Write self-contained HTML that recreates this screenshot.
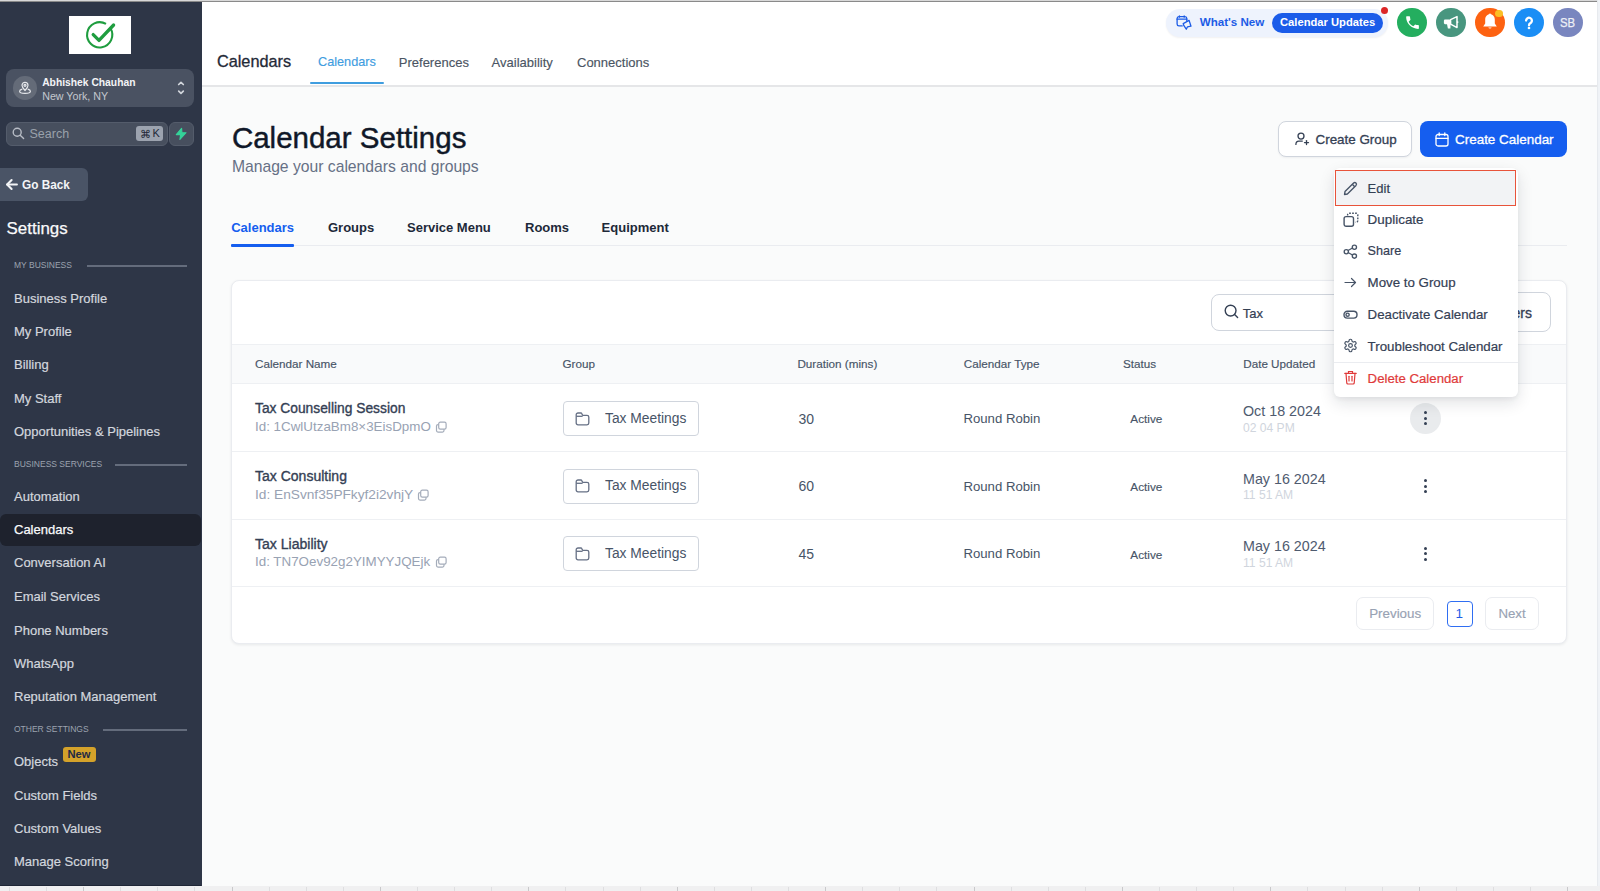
<!DOCTYPE html>
<html><head><meta charset="utf-8"><title>Calendar Settings</title>
<style>
html,body{margin:0;padding:0;width:1600px;height:891px;overflow:hidden;background:#f9fafb;}
body{position:relative;font-family:"Liberation Sans",sans-serif;}
.t{position:absolute;white-space:nowrap;}
.r{position:absolute;}
svg.r{overflow:visible;}
</style></head><body>
<div class="r" style="left:0.0px;top:0.0px;width:201.6px;height:886.2px;background:#2e3647;"></div>
<div class="r" style="left:69.3px;top:16.4px;width:61.7px;height:37.2px;background:#fff;"></div>
<svg class="r" style="left:84px;top:21px" width="32" height="28" viewBox="0 0 32 28">
<path d="M22 2.9 A12.6 12.6 0 1 0 26.6 7.5" fill="none" stroke="#1f9d3f" stroke-width="2.1"/>
<path d="M9.2 13.6 L15 19.4 L29.6 4" fill="none" stroke="#1f9d3f" stroke-width="3.3" stroke-linecap="round" stroke-linejoin="round"/>
</svg>
<div class="r" style="left:6.2px;top:68.5px;width:188.0px;height:38.7px;background:#4a5262;border-radius:8px;"></div>
<div class="r" style="left:13.0px;top:76.3px;width:23.5px;height:23.5px;background:#646b78;border-radius:50%;"></div>
<svg class="r" style="left:17px;top:79.1px" width="16" height="16" viewBox="0 0 16 16" fill="none" stroke="#e5e7eb" stroke-width="1.2">
<path d="M8 11.5 C5.5 9 5 7.8 5 6.3 A3 3 0 0 1 11 6.3 C11 7.8 10.5 9 8 11.5 Z"/><circle cx="8" cy="6.3" r="1"/>
<path d="M5.3 10.2 C3.5 10.7 2.6 11.4 2.6 12.2 C2.6 13.4 5 14.3 8 14.3 C11 14.3 13.4 13.4 13.4 12.2 C13.4 11.4 12.5 10.7 10.7 10.2"/>
</svg>
<div class="t" style="left:42.2px;top:78.48px;font-size:10.3px;line-height:10.3px;color:#f3f4f6;font-weight:700;">Abhishek Chauhan</div>
<div class="t" style="left:42.2px;top:91.34px;font-size:10.7px;line-height:10.7px;color:#c4c8cf;font-weight:400;">New York, NY</div>
<svg class="r" style="left:176px;top:80px" width="10" height="17" viewBox="0 0 10 17" fill="none" stroke="#d1d5db" stroke-width="1.7" stroke-linecap="round" stroke-linejoin="round">
<path d="M2.7 4.5 L5 2.3 L7.3 4.5"/><path d="M2.7 11.2 L5 13.4 L7.3 11.2"/></svg>
<div class="r" style="left:6.3px;top:121.8px;width:161.9px;height:24.0px;background:#474f5e;border:1px solid #545c6b;box-sizing:border-box;border-radius:6px;"></div>
<svg class="r" style="left:12px;top:127px" width="13" height="13" viewBox="0 0 13 13" fill="none" stroke="#b8bdc6" stroke-width="1.4" stroke-linecap="round">
<circle cx="5.2" cy="5.2" r="4"/><path d="M8.2 8.2 L11.6 11.6"/></svg>
<div class="t" style="left:29.5px;top:127.72px;font-size:12.5px;line-height:12.5px;color:#9aa1ab;font-weight:400;">Search</div>
<div class="r" style="left:136.1px;top:126.2px;width:27.4px;height:15.2px;background:#9ca3af;border-radius:3px;"></div>
<div class="t" style="left:139.5px;top:128.91px;font-size:10.5px;line-height:10.5px;color:#1f2937;font-weight:400;">&#8984;</div>
<div class="t" style="left:152.5px;top:128.49px;font-size:11px;line-height:11px;color:#1f2937;font-weight:400;">K</div>
<div class="r" style="left:168.8px;top:121.9px;width:25.4px;height:23.9px;background:#474f5e;border:1px solid #545c6b;box-sizing:border-box;border-radius:6px;"></div>
<svg class="r" style="left:175px;top:127px" width="13" height="14" viewBox="0 0 13 14">
<path d="M6.6 1.3 L1.3 7.6 H5.6 L4.9 12.5 L11 5.7 H6.9 Z" fill="#34d399" stroke="#34d399" stroke-width="1.1" stroke-linejoin="round"/></svg>
<div class="r" style="left:0.0px;top:168.2px;width:87.7px;height:33.0px;background:#4a5466;border-radius:0 6px 6px 0;"></div>
<svg class="r" style="left:5px;top:178px" width="14" height="13" viewBox="0 0 14 13" fill="none" stroke="#f3f4f6" stroke-width="2.1" stroke-linecap="round" stroke-linejoin="round">
<path d="M11.9 6.5 L2.3 6.5"/><path d="M6.6 2 L2.1 6.5 L6.6 11"/></svg>
<div class="t" style="left:21.5px;top:178.43px;font-size:13.2px;line-height:13.2px;color:#f3f4f6;font-weight:700;transform:scaleX(0.895);transform-origin:0 0;">Go Back</div>
<div class="t" style="left:6.6px;top:220.69px;font-size:16.9px;line-height:16.9px;color:#f9fafb;font-weight:400;-webkit-text-stroke:0.25px #f9fafb;">Settings</div>
<div class="t" style="left:14.0px;top:261.30px;font-size:8.5px;line-height:8.5px;color:#9ca3af;font-weight:400;">MY BUSINESS</div>
<div class="r" style="left:87.0px;top:265.2px;width:100.0px;height:1.5px;background:#646c7c;"></div>
<div class="t" style="left:14.0px;top:291.50px;font-size:13px;line-height:13px;color:#d3d7de;font-weight:400;-webkit-text-stroke:0.2px #d3d7de;">Business Profile</div>
<div class="t" style="left:14.0px;top:324.90px;font-size:13px;line-height:13px;color:#d3d7de;font-weight:400;-webkit-text-stroke:0.2px #d3d7de;">My Profile</div>
<div class="t" style="left:14.0px;top:358.30px;font-size:13px;line-height:13px;color:#d3d7de;font-weight:400;-webkit-text-stroke:0.2px #d3d7de;">Billing</div>
<div class="t" style="left:14.0px;top:391.70px;font-size:13px;line-height:13px;color:#d3d7de;font-weight:400;-webkit-text-stroke:0.2px #d3d7de;">My Staff</div>
<div class="t" style="left:14.0px;top:424.80px;font-size:13px;line-height:13px;color:#d3d7de;font-weight:400;-webkit-text-stroke:0.2px #d3d7de;">Opportunities &amp; Pipelines</div>
<div class="t" style="left:14.0px;top:460.40px;font-size:8.5px;line-height:8.5px;color:#9ca3af;font-weight:400;">BUSINESS SERVICES</div>
<div class="r" style="left:115.0px;top:464.3px;width:72.0px;height:1.5px;background:#646c7c;"></div>
<div class="t" style="left:14.0px;top:489.70px;font-size:13px;line-height:13px;color:#d3d7de;font-weight:400;-webkit-text-stroke:0.2px #d3d7de;">Automation</div>
<div class="r" style="left:0.0px;top:513.9px;width:200.8px;height:32.4px;background:#1e222d;border-radius:6px;"></div>
<div class="t" style="left:14.0px;top:523.00px;font-size:13px;line-height:13px;color:#f9fafb;font-weight:400;-webkit-text-stroke:0.25px #f9fafb;">Calendars</div>
<div class="t" style="left:14.0px;top:556.30px;font-size:13px;line-height:13px;color:#d3d7de;font-weight:400;-webkit-text-stroke:0.2px #d3d7de;">Conversation AI</div>
<div class="t" style="left:14.0px;top:589.90px;font-size:13px;line-height:13px;color:#d3d7de;font-weight:400;-webkit-text-stroke:0.2px #d3d7de;">Email Services</div>
<div class="t" style="left:14.0px;top:623.50px;font-size:13px;line-height:13px;color:#d3d7de;font-weight:400;-webkit-text-stroke:0.2px #d3d7de;">Phone Numbers</div>
<div class="t" style="left:14.0px;top:656.70px;font-size:13px;line-height:13px;color:#d3d7de;font-weight:400;-webkit-text-stroke:0.2px #d3d7de;">WhatsApp</div>
<div class="t" style="left:14.0px;top:690.30px;font-size:13px;line-height:13px;color:#d3d7de;font-weight:400;-webkit-text-stroke:0.2px #d3d7de;">Reputation Management</div>
<div class="t" style="left:14.0px;top:725.30px;font-size:8.5px;line-height:8.5px;color:#9ca3af;font-weight:400;">OTHER SETTINGS</div>
<div class="r" style="left:103.0px;top:729.2px;width:84.0px;height:1.5px;background:#646c7c;"></div>
<div class="t" style="left:14.0px;top:754.60px;font-size:13px;line-height:13px;color:#d3d7de;font-weight:400;-webkit-text-stroke:0.2px #d3d7de;">Objects</div>
<div class="r" style="left:63.1px;top:746.9px;width:32.5px;height:15.4px;background:#d4a22a;border-radius:3px;"></div>
<div class="t" style="left:67.5px;top:748.52px;font-size:11.2px;line-height:11.2px;color:#1f2a44;font-weight:700;">New</div>
<div class="t" style="left:14.0px;top:788.50px;font-size:13px;line-height:13px;color:#d3d7de;font-weight:400;-webkit-text-stroke:0.2px #d3d7de;">Custom Fields</div>
<div class="t" style="left:14.0px;top:821.70px;font-size:13px;line-height:13px;color:#d3d7de;font-weight:400;-webkit-text-stroke:0.2px #d3d7de;">Custom Values</div>
<div class="t" style="left:14.0px;top:855.10px;font-size:13px;line-height:13px;color:#d3d7de;font-weight:400;-webkit-text-stroke:0.2px #d3d7de;">Manage Scoring</div>
<div class="r" style="left:0.0px;top:886.2px;width:1600.0px;height:4.8px;background:#f0f0f1;"></div>
<div class="r" style="left:0.0px;top:885.2px;width:201.4px;height:1.1px;background:#1f2636;"></div>
<div class="r" style="left:8.9px;top:886.5px;width:1.1px;height:4.5px;background:#dedee0;"></div>
<div class="r" style="left:46.0px;top:886.5px;width:1.1px;height:4.5px;background:#dedee0;"></div>
<div class="r" style="left:83.1px;top:886.5px;width:1.1px;height:4.5px;background:#c9c9cb;"></div>
<div class="r" style="left:120.2px;top:886.5px;width:1.1px;height:4.5px;background:#dedee0;"></div>
<div class="r" style="left:157.3px;top:886.5px;width:1.1px;height:4.5px;background:#dedee0;"></div>
<div class="r" style="left:194.4px;top:886.5px;width:1.1px;height:4.5px;background:#dedee0;"></div>
<div class="r" style="left:231.5px;top:886.5px;width:1.1px;height:4.5px;background:#c9c9cb;"></div>
<div class="r" style="left:268.6px;top:886.5px;width:1.1px;height:4.5px;background:#dedee0;"></div>
<div class="r" style="left:305.7px;top:886.5px;width:1.1px;height:4.5px;background:#dedee0;"></div>
<div class="r" style="left:342.8px;top:886.5px;width:1.1px;height:4.5px;background:#dedee0;"></div>
<div class="r" style="left:379.9px;top:886.5px;width:1.1px;height:4.5px;background:#c9c9cb;"></div>
<div class="r" style="left:417.0px;top:886.5px;width:1.1px;height:4.5px;background:#dedee0;"></div>
<div class="r" style="left:454.1px;top:886.5px;width:1.1px;height:4.5px;background:#dedee0;"></div>
<div class="r" style="left:491.2px;top:886.5px;width:1.1px;height:4.5px;background:#dedee0;"></div>
<div class="r" style="left:528.3px;top:886.5px;width:1.1px;height:4.5px;background:#c9c9cb;"></div>
<div class="r" style="left:565.4px;top:886.5px;width:1.1px;height:4.5px;background:#dedee0;"></div>
<div class="r" style="left:602.5px;top:886.5px;width:1.1px;height:4.5px;background:#dedee0;"></div>
<div class="r" style="left:639.6px;top:886.5px;width:1.1px;height:4.5px;background:#dedee0;"></div>
<div class="r" style="left:676.7px;top:886.5px;width:1.1px;height:4.5px;background:#c9c9cb;"></div>
<div class="r" style="left:713.8px;top:886.5px;width:1.1px;height:4.5px;background:#dedee0;"></div>
<div class="r" style="left:750.9px;top:886.5px;width:1.1px;height:4.5px;background:#dedee0;"></div>
<div class="r" style="left:788.0px;top:886.5px;width:1.1px;height:4.5px;background:#dedee0;"></div>
<div class="r" style="left:825.1px;top:886.5px;width:1.1px;height:4.5px;background:#c9c9cb;"></div>
<div class="r" style="left:862.2px;top:886.5px;width:1.1px;height:4.5px;background:#dedee0;"></div>
<div class="r" style="left:899.3px;top:886.5px;width:1.1px;height:4.5px;background:#dedee0;"></div>
<div class="r" style="left:936.4px;top:886.5px;width:1.1px;height:4.5px;background:#dedee0;"></div>
<div class="r" style="left:973.5px;top:886.5px;width:1.1px;height:4.5px;background:#c9c9cb;"></div>
<div class="r" style="left:1010.6px;top:886.5px;width:1.1px;height:4.5px;background:#dedee0;"></div>
<div class="r" style="left:1047.7px;top:886.5px;width:1.1px;height:4.5px;background:#dedee0;"></div>
<div class="r" style="left:1084.8px;top:886.5px;width:1.1px;height:4.5px;background:#dedee0;"></div>
<div class="r" style="left:1121.9px;top:886.5px;width:1.1px;height:4.5px;background:#c9c9cb;"></div>
<div class="r" style="left:1159.0px;top:886.5px;width:1.1px;height:4.5px;background:#dedee0;"></div>
<div class="r" style="left:1196.1px;top:886.5px;width:1.1px;height:4.5px;background:#dedee0;"></div>
<div class="r" style="left:1233.2px;top:886.5px;width:1.1px;height:4.5px;background:#dedee0;"></div>
<div class="r" style="left:1270.3px;top:886.5px;width:1.1px;height:4.5px;background:#c9c9cb;"></div>
<div class="r" style="left:1307.4px;top:886.5px;width:1.1px;height:4.5px;background:#dedee0;"></div>
<div class="r" style="left:1344.5px;top:886.5px;width:1.1px;height:4.5px;background:#dedee0;"></div>
<div class="r" style="left:1381.6px;top:886.5px;width:1.1px;height:4.5px;background:#dedee0;"></div>
<div class="r" style="left:1418.7px;top:886.5px;width:1.1px;height:4.5px;background:#c9c9cb;"></div>
<div class="r" style="left:1455.8px;top:886.5px;width:1.1px;height:4.5px;background:#dedee0;"></div>
<div class="r" style="left:1492.9px;top:886.5px;width:1.1px;height:4.5px;background:#dedee0;"></div>
<div class="r" style="left:1530.0px;top:886.5px;width:1.1px;height:4.5px;background:#dedee0;"></div>
<div class="r" style="left:1567.1px;top:886.5px;width:1.1px;height:4.5px;background:#c9c9cb;"></div>
<div class="r" style="left:1604.2px;top:886.5px;width:1.1px;height:4.5px;background:#dedee0;"></div>
<div class="r" style="left:201.6px;top:1.0px;width:1395.4px;height:84.3px;background:#fff;"></div>
<div class="r" style="left:201.6px;top:85.3px;width:1395.1px;height:1.3px;background:#e5e6e8;box-shadow:0 1px 1.5px rgba(0,0,0,0.05);"></div>
<div class="r" style="left:0.0px;top:0.0px;width:1600.0px;height:1.1px;background:#d8d8d8;"></div>
<div class="r" style="left:0.0px;top:1.1px;width:1600.0px;height:0.8px;background:#8a8a8a;"></div>
<div class="r" style="left:1596.7px;top:0.0px;width:3.3px;height:886.2px;background:#f0f3f7;box-shadow:inset 1px 0 1px rgba(0,0,0,0.04);"></div>
<div class="t" style="left:216.9px;top:52.70px;font-size:16.3px;line-height:16.3px;color:#1f2937;font-weight:400;-webkit-text-stroke:0.3px #1f2937;">Calendars</div>
<div class="t" style="left:318.0px;top:55.55px;font-size:12.7px;line-height:12.7px;color:#3f9ddf;font-weight:400;-webkit-text-stroke:0.15px #3f9ddf;">Calendars</div>
<div class="r" style="left:310.0px;top:81.6px;width:74.0px;height:2.0px;background:#3f9ddf;border-radius:1px;"></div>
<div class="t" style="left:398.8px;top:56.40px;font-size:13px;line-height:13px;color:#4b5563;font-weight:400;-webkit-text-stroke:0.15px #4b5563;">Preferences</div>
<div class="t" style="left:491.6px;top:56.40px;font-size:13px;line-height:13px;color:#4b5563;font-weight:400;-webkit-text-stroke:0.15px #4b5563;">Availability</div>
<div class="t" style="left:577.0px;top:56.40px;font-size:13px;line-height:13px;color:#4b5563;font-weight:400;-webkit-text-stroke:0.15px #4b5563;">Connections</div>
<div class="r" style="left:1166.0px;top:9.0px;width:222.0px;height:27.8px;background:#eef3fd;border-radius:14px;box-shadow:0 1px 2px rgba(16,24,40,0.06);"></div>
<svg class="r" style="left:1176px;top:15px" width="16" height="15" viewBox="0 0 16 15" fill="none" stroke="#1d5ce6" stroke-width="1.3" stroke-linecap="round" stroke-linejoin="round">
<path d="M6.2 10.9 H3 A2 2 0 0 1 1.1 8.9 V3.6 A2 2 0 0 1 3 1.6 H8.9 A2 2 0 0 1 10.8 3.6 V6"/><path d="M1.1 4.2 H10.8"/><path d="M3.4 0.9 V2.2"/><path d="M8.2 0.9 V2.2"/>
<path d="M7.2 8.6 L13.1 5.4 L15 11.2 L11.5 11.8 L10.3 14.2 L7.9 10.7 Z"/></svg>
<div class="t" style="left:1199.7px;top:16.38px;font-size:11.6px;line-height:11.6px;color:#1d5ce6;font-weight:700;">What's New</div>
<div class="r" style="left:1271.7px;top:12.8px;width:111.7px;height:19.9px;background:#1b5ce9;border-radius:10px;"></div>
<div class="t" style="left:1280.0px;top:16.72px;font-size:11.2px;line-height:11.2px;color:#ffffff;font-weight:700;">Calendar Updates</div>
<div class="r" style="left:1380.5px;top:6.8px;width:7.5px;height:7.5px;background:#dc2626;border-radius:50%;"></div>
<div class="r" style="left:1397.2px;top:7.7px;width:29.7px;height:29.7px;background:#24ae5f;border-radius:50%;"></div>
<svg class="r" style="left:1403.5px;top:14px" width="17" height="17" viewBox="0 0 24 24"><path fill="#fff" d="M6.6 10.8c1.4 2.8 3.8 5.1 6.6 6.6l2.2-2.2c.3-.3.7-.4 1-.2 1.1.4 2.3.6 3.6.6.6 0 1 .4 1 1V20c0 .6-.4 1-1 1C10.6 21 3 13.4 3 4c0-.6.4-1 1-1h3.5c.6 0 1 .4 1 1 0 1.3.2 2.5.6 3.6.1.3 0 .7-.2 1L6.6 10.8z"/></svg>
<div class="r" style="left:1436.2px;top:7.7px;width:29.7px;height:29.7px;background:#48967f;border-radius:50%;"></div>
<svg class="r" style="left:1443px;top:15px" width="16" height="15" viewBox="0 0 16 15">
<rect x="0.9" y="4.6" width="6.6" height="4.6" rx="1.1" fill="#fff"/><path d="M3.9 8.8 H7.6 L7.4 13.6 H4.9 Z" fill="#fff"/>
<path d="M7.6 4.7 L14 1.6 V12.6 L7.6 9.1 Z" fill="none" stroke="#fff" stroke-width="1.5" stroke-linejoin="round"/><circle cx="14.6" cy="7.1" r="0.9" fill="#fff"/></svg>
<div class="r" style="left:1475.2px;top:7.7px;width:29.7px;height:29.7px;background:#fd6211;border-radius:50%;"></div>
<svg class="r" style="left:1482px;top:13px" width="16" height="18" viewBox="0 0 16 18"><path fill="#fff" d="M8 1.2 C4.8 1.2 3.2 3.8 3.2 6.6 V10.6 L1.2 13.4 H14.8 L12.8 10.6 V6.6 C12.8 3.8 11.2 1.2 8 1.2 Z"/><path fill="#fff" d="M6.3 14.6 A1.8 1.5 0 0 0 9.7 14.6 Z"/><circle cx="8" cy="1.4" r="1" fill="#fff"/></svg>
<div class="r" style="left:1495.3px;top:9.5px;width:7.4px;height:7.4px;background:#fbbf24;border-radius:50%;"></div>
<div class="r" style="left:1514.2px;top:7.7px;width:29.7px;height:29.7px;background:#1b8ef5;border-radius:50%;"></div>
<svg class="r" style="left:1521.25px;top:14.5px" width="16" height="16" viewBox="0 0 16 16"><path d="M5.1 5.6 A2.9 2.9 0 1 1 9.9 7.8 C8.6 8.6 8 9.2 8 10.3" fill="none" stroke="#fff" stroke-width="2.3" stroke-linecap="round"/><circle cx="8" cy="13" r="1.35" fill="#fff"/></svg>
<div class="r" style="left:1553.2px;top:7.7px;width:29.7px;height:29.7px;background:#7986bf;border-radius:50%;"></div>
<div class="t" style="left:1560.3px;top:16.23px;font-size:13.2px;line-height:13.2px;color:#eef0f6;font-weight:400;-webkit-text-stroke:0.25px #eef0f6;transform:scaleX(0.86);transform-origin:0 0;">SB</div>
<div class="r" style="left:201.6px;top:86.6px;width:1395.1px;height:799.6px;background:#fafbfb;"></div>
<div class="t" style="left:231.9px;top:122.63px;font-size:29.5px;line-height:29.5px;color:#101828;font-weight:400;-webkit-text-stroke:0.45px #101828;">Calendar Settings</div>
<div class="t" style="left:231.9px;top:158.81px;font-size:15.7px;line-height:15.7px;color:#667085;font-weight:400;">Manage your calendars and groups</div>
<div class="r" style="left:1278.3px;top:120.7px;width:133.7px;height:36.8px;background:#fff;border:1px solid #d0d5dd;border-radius:8px;box-sizing:border-box;box-shadow:0 1px 2px rgba(16,24,40,0.05);"></div>
<svg class="r" style="left:1294px;top:132px" width="16" height="15" viewBox="0 0 16 15" fill="none" stroke="#344054" stroke-width="1.3" stroke-linecap="round">
<circle cx="7" cy="4.1" r="3"/><path d="M1.9 12.4 C1.9 10.4 2.9 9.1 4.9 9.1 H8.3"/><path d="M12.5 8.6 V12.6"/><path d="M10.5 10.6 H14.5"/></svg>
<div class="t" style="left:1315.5px;top:132.56px;font-size:13.4px;line-height:13.4px;color:#344054;font-weight:400;-webkit-text-stroke:0.3px #344054;">Create Group</div>
<div class="r" style="left:1419.6px;top:120.7px;width:147.4px;height:36.8px;background:#155eef;border-radius:8px;"></div>
<svg class="r" style="left:1434.5px;top:132px" width="14" height="15" viewBox="0 0 14 15" fill="none" stroke="#fff" stroke-width="1.3" stroke-linecap="round">
<rect x="1" y="2.5" width="12" height="11.5" rx="2"/><path d="M1 6.3 H13"/><path d="M4.2 1 V3.6"/><path d="M9.8 1 V3.6"/></svg>
<div class="t" style="left:1455.0px;top:132.51px;font-size:13.45px;line-height:13.45px;color:#ffffff;font-weight:400;-webkit-text-stroke:0.3px #ffffff;">Create Calendar</div>
<div class="r" style="left:231.2px;top:245.2px;width:1335.8px;height:1.1px;background:#eaecf0;"></div>
<div class="t" style="left:231.2px;top:220.90px;font-size:13px;line-height:13px;color:#155eef;font-weight:700;">Calendars</div>
<div class="t" style="left:328.0px;top:220.90px;font-size:13px;line-height:13px;color:#1d2939;font-weight:700;">Groups</div>
<div class="t" style="left:407.0px;top:220.90px;font-size:13px;line-height:13px;color:#1d2939;font-weight:700;">Service Menu</div>
<div class="t" style="left:525.0px;top:220.90px;font-size:13px;line-height:13px;color:#1d2939;font-weight:700;">Rooms</div>
<div class="t" style="left:601.6px;top:220.90px;font-size:13px;line-height:13px;color:#1d2939;font-weight:700;">Equipment</div>
<div class="r" style="left:231.2px;top:244.3px;width:63.1px;height:2.6px;background:#155eef;border-radius:1px;"></div>
<div class="r" style="left:231.3px;top:279.8px;width:1335.4px;height:364.5px;background:#fff;border:1px solid #eaecf0;border-radius:8px;box-sizing:border-box;box-shadow:0 1px 3px rgba(16,24,40,0.08);"></div>
<div class="r" style="left:1210.7px;top:294.2px;width:259.3px;height:36.4px;background:#fff;border:1px solid #d0d5dd;border-radius:8px;box-sizing:border-box;"></div>
<svg class="r" style="left:1223.5px;top:304px" width="15" height="15" viewBox="0 0 15 15" fill="none" stroke="#344054" stroke-width="1.4" stroke-linecap="round">
<circle cx="6.6" cy="6.6" r="5.4"/><path d="M10.6 10.6 L13.6 13.6"/></svg>
<div class="t" style="left:1242.8px;top:306.50px;font-size:13px;line-height:13px;color:#344054;font-weight:400;-webkit-text-stroke:0.2px #344054;">Tax</div>
<div class="r" style="left:1478.0px;top:292.4px;width:73.0px;height:39.9px;background:#fff;border:1px solid #d0d5dd;border-radius:8px;box-sizing:border-box;"></div>
<div class="t" style="left:1493.9px;top:305.65px;font-size:14px;line-height:14px;color:#344054;font-weight:400;-webkit-text-stroke:0.3px #344054;">Filters</div>
<div class="r" style="left:232.3px;top:344.3px;width:1333.4px;height:40.2px;background:#f9fafb;border-top:1px solid #eef0f3;border-bottom:1px solid #eef0f3;box-sizing:border-box;"></div>
<div class="t" style="left:255.0px;top:358.40px;font-size:11.7px;line-height:11.7px;color:#475467;font-weight:400;-webkit-text-stroke:0.15px #475467;">Calendar Name</div>
<div class="t" style="left:562.5px;top:358.40px;font-size:11.7px;line-height:11.7px;color:#475467;font-weight:400;-webkit-text-stroke:0.15px #475467;">Group</div>
<div class="t" style="left:797.4px;top:358.40px;font-size:11.7px;line-height:11.7px;color:#475467;font-weight:400;-webkit-text-stroke:0.15px #475467;">Duration (mins)</div>
<div class="t" style="left:963.8px;top:358.40px;font-size:11.7px;line-height:11.7px;color:#475467;font-weight:400;-webkit-text-stroke:0.15px #475467;">Calendar Type</div>
<div class="t" style="left:1123.0px;top:358.40px;font-size:11.7px;line-height:11.7px;color:#475467;font-weight:400;-webkit-text-stroke:0.15px #475467;">Status</div>
<div class="t" style="left:1243.2px;top:358.40px;font-size:11.7px;line-height:11.7px;color:#475467;font-weight:400;-webkit-text-stroke:0.15px #475467;">Date Updated</div>
<div class="r" style="left:232.3px;top:451.2px;width:1333.4px;height:1.1px;background:#eef0f3;"></div>
<div class="t" style="left:255.0px;top:401.92px;font-size:13.8px;line-height:13.8px;color:#344054;font-weight:400;-webkit-text-stroke:0.35px #344054;">Tax Counselling Session</div>
<div class="t" style="left:255.0px;top:420.17px;font-size:13.39px;line-height:13.39px;color:#98a2b3;font-weight:400;">Id: 1CwlUtzaBm8&#215;3EisDpmO</div>
<svg class="r" style="left:434.6px;top:421.9px" width="12" height="11" viewBox="0 0 12 11" fill="none" stroke="#a4acba" stroke-width="1.2">
<rect x="3.7" y="0.1" width="7.4" height="7.1" rx="1.6"/><path d="M3.6 2.6 H3 A1.5 1.5 0 0 0 1.5 4.1 V8.6 A1.5 1.5 0 0 0 3 10.1 H7.5 A1.5 1.5 0 0 0 9 8.6 V7.2"/></svg>
<div class="r" style="left:563.1px;top:401.0px;width:135.6px;height:35.2px;background:#fff;border:1px solid #d0d5dd;border-radius:4px;box-sizing:border-box;"></div>
<svg class="r" style="left:575px;top:411.8px" width="15" height="14" viewBox="0 0 15 14" fill="none" stroke="#667085" stroke-width="1.3" stroke-linejoin="round">
<path d="M1.2 2.8 A1.8 1.8 0 0 1 3 1 H5.9 A1 1 0 0 1 6.8 1.6 L7.6 3.3 H12 A1.8 1.8 0 0 1 13.8 5.1 V11 A1.8 1.8 0 0 1 12 12.8 H3 A1.8 1.8 0 0 1 1.2 11 Z"/><path d="M1.2 4.3 H7.6"/></svg>
<div class="t" style="left:605.0px;top:411.72px;font-size:13.8px;line-height:13.8px;color:#475467;font-weight:400;">Tax Meetings</div>
<div class="t" style="left:798.4px;top:411.55px;font-size:14px;line-height:14px;color:#475467;font-weight:400;">30</div>
<div class="t" style="left:963.4px;top:412.23px;font-size:13.19px;line-height:13.19px;color:#475467;font-weight:400;">Round Robin</div>
<div class="t" style="left:1130.3px;top:413.45px;font-size:11.75px;line-height:11.75px;color:#475467;font-weight:400;-webkit-text-stroke:0.15px #475467;">Active</div>
<div class="t" style="left:1243.0px;top:404.10px;font-size:14.3px;line-height:14.3px;color:#4f5b6f;font-weight:400;">Oct 18 2024</div>
<div class="t" style="left:1243.0px;top:421.76px;font-size:12.1px;line-height:12.1px;color:#d0d5dd;font-weight:400;">02 04 PM</div>
<div class="r" style="left:1410.1px;top:402.9px;width:31.0px;height:31.0px;background:#e9ebed;border-radius:50%;"></div>
<div class="r" style="left:1424.0px;top:411.4px;width:3.1px;height:3.1px;background:#344054;border-radius:50%;"></div>
<div class="r" style="left:1424.0px;top:416.9px;width:3.1px;height:3.1px;background:#344054;border-radius:50%;"></div>
<div class="r" style="left:1424.0px;top:422.4px;width:3.1px;height:3.1px;background:#344054;border-radius:50%;"></div>
<div class="r" style="left:232.3px;top:518.8px;width:1333.4px;height:1.1px;background:#eef0f3;"></div>
<div class="t" style="left:255.0px;top:469.32px;font-size:14.03px;line-height:14.03px;color:#344054;font-weight:400;-webkit-text-stroke:0.35px #344054;">Tax Consulting</div>
<div class="t" style="left:255.0px;top:487.50px;font-size:13.7px;line-height:13.7px;color:#98a2b3;font-weight:400;">Id: EnSvnf35PFkyf2i2vhjY</div>
<svg class="r" style="left:416.9px;top:489.5px" width="12" height="11" viewBox="0 0 12 11" fill="none" stroke="#a4acba" stroke-width="1.2">
<rect x="3.7" y="0.1" width="7.4" height="7.1" rx="1.6"/><path d="M3.6 2.6 H3 A1.5 1.5 0 0 0 1.5 4.1 V8.6 A1.5 1.5 0 0 0 3 10.1 H7.5 A1.5 1.5 0 0 0 9 8.6 V7.2"/></svg>
<div class="r" style="left:563.1px;top:468.6px;width:135.6px;height:35.2px;background:#fff;border:1px solid #d0d5dd;border-radius:4px;box-sizing:border-box;"></div>
<svg class="r" style="left:575px;top:479.4px" width="15" height="14" viewBox="0 0 15 14" fill="none" stroke="#667085" stroke-width="1.3" stroke-linejoin="round">
<path d="M1.2 2.8 A1.8 1.8 0 0 1 3 1 H5.9 A1 1 0 0 1 6.8 1.6 L7.6 3.3 H12 A1.8 1.8 0 0 1 13.8 5.1 V11 A1.8 1.8 0 0 1 12 12.8 H3 A1.8 1.8 0 0 1 1.2 11 Z"/><path d="M1.2 4.3 H7.6"/></svg>
<div class="t" style="left:605.0px;top:479.32px;font-size:13.8px;line-height:13.8px;color:#475467;font-weight:400;">Tax Meetings</div>
<div class="t" style="left:798.4px;top:479.15px;font-size:14px;line-height:14px;color:#475467;font-weight:400;">60</div>
<div class="t" style="left:963.4px;top:479.83px;font-size:13.19px;line-height:13.19px;color:#475467;font-weight:400;">Round Robin</div>
<div class="t" style="left:1130.3px;top:481.05px;font-size:11.75px;line-height:11.75px;color:#475467;font-weight:400;-webkit-text-stroke:0.15px #475467;">Active</div>
<div class="t" style="left:1243.0px;top:471.70px;font-size:14.3px;line-height:14.3px;color:#4f5b6f;font-weight:400;">May 16 2024</div>
<div class="t" style="left:1243.0px;top:489.36px;font-size:12.1px;line-height:12.1px;color:#d0d5dd;font-weight:400;">11 51 AM</div>
<div class="r" style="left:1424.0px;top:479.0px;width:3.1px;height:3.1px;background:#344054;border-radius:50%;"></div>
<div class="r" style="left:1424.0px;top:484.5px;width:3.1px;height:3.1px;background:#344054;border-radius:50%;"></div>
<div class="r" style="left:1424.0px;top:490.0px;width:3.1px;height:3.1px;background:#344054;border-radius:50%;"></div>
<div class="r" style="left:232.3px;top:586.4px;width:1333.4px;height:1.1px;background:#eef0f3;"></div>
<div class="t" style="left:255.0px;top:536.91px;font-size:14.05px;line-height:14.05px;color:#344054;font-weight:400;-webkit-text-stroke:0.35px #344054;">Tax Liability</div>
<div class="t" style="left:255.0px;top:555.37px;font-size:13.39px;line-height:13.39px;color:#98a2b3;font-weight:400;">Id: TN7Oev92g2YIMYYJQEjk</div>
<svg class="r" style="left:434.8px;top:557.1px" width="12" height="11" viewBox="0 0 12 11" fill="none" stroke="#a4acba" stroke-width="1.2">
<rect x="3.7" y="0.1" width="7.4" height="7.1" rx="1.6"/><path d="M3.6 2.6 H3 A1.5 1.5 0 0 0 1.5 4.1 V8.6 A1.5 1.5 0 0 0 3 10.1 H7.5 A1.5 1.5 0 0 0 9 8.6 V7.2"/></svg>
<div class="r" style="left:563.1px;top:536.2px;width:135.6px;height:35.2px;background:#fff;border:1px solid #d0d5dd;border-radius:4px;box-sizing:border-box;"></div>
<svg class="r" style="left:575px;top:547.0px" width="15" height="14" viewBox="0 0 15 14" fill="none" stroke="#667085" stroke-width="1.3" stroke-linejoin="round">
<path d="M1.2 2.8 A1.8 1.8 0 0 1 3 1 H5.9 A1 1 0 0 1 6.8 1.6 L7.6 3.3 H12 A1.8 1.8 0 0 1 13.8 5.1 V11 A1.8 1.8 0 0 1 12 12.8 H3 A1.8 1.8 0 0 1 1.2 11 Z"/><path d="M1.2 4.3 H7.6"/></svg>
<div class="t" style="left:605.0px;top:546.92px;font-size:13.8px;line-height:13.8px;color:#475467;font-weight:400;">Tax Meetings</div>
<div class="t" style="left:798.4px;top:546.75px;font-size:14px;line-height:14px;color:#475467;font-weight:400;">45</div>
<div class="t" style="left:963.4px;top:547.43px;font-size:13.19px;line-height:13.19px;color:#475467;font-weight:400;">Round Robin</div>
<div class="t" style="left:1130.3px;top:548.65px;font-size:11.75px;line-height:11.75px;color:#475467;font-weight:400;-webkit-text-stroke:0.15px #475467;">Active</div>
<div class="t" style="left:1243.0px;top:539.30px;font-size:14.3px;line-height:14.3px;color:#4f5b6f;font-weight:400;">May 16 2024</div>
<div class="t" style="left:1243.0px;top:556.96px;font-size:12.1px;line-height:12.1px;color:#d0d5dd;font-weight:400;">11 51 AM</div>
<div class="r" style="left:1424.0px;top:546.5px;width:3.1px;height:3.1px;background:#344054;border-radius:50%;"></div>
<div class="r" style="left:1424.0px;top:552.0px;width:3.1px;height:3.1px;background:#344054;border-radius:50%;"></div>
<div class="r" style="left:1424.0px;top:557.5px;width:3.1px;height:3.1px;background:#344054;border-radius:50%;"></div>
<div class="r" style="left:1356.2px;top:597.0px;width:78.3px;height:33.4px;background:#fff;border:1px solid #eaecf0;border-radius:7px;box-sizing:border-box;"></div>
<div class="t" style="left:1369.2px;top:607.18px;font-size:13.37px;line-height:13.37px;color:#98a2b3;font-weight:400;-webkit-text-stroke:0.15px #98a2b3;">Previous</div>
<div class="r" style="left:1446.8px;top:600.8px;width:26.1px;height:26.0px;background:#fff;border:1.5px solid #2f6ef2;border-radius:4px;box-sizing:border-box;"></div>
<div class="t" style="left:1455.5px;top:607.07px;font-size:13.5px;line-height:13.5px;color:#1d5ce6;font-weight:400;">1</div>
<div class="r" style="left:1485.1px;top:597.0px;width:53.5px;height:33.4px;background:#fff;border:1px solid #eaecf0;border-radius:7px;box-sizing:border-box;"></div>
<div class="t" style="left:1498.4px;top:607.26px;font-size:13.28px;line-height:13.28px;color:#98a2b3;font-weight:400;-webkit-text-stroke:0.15px #98a2b3;">Next</div>
<div class="r" style="left:1334.2px;top:168.0px;width:183.6px;height:228.5px;background:#fff;border-radius:6px;box-shadow:0 6px 16px rgba(16,24,40,0.12),0 2px 4px rgba(16,24,40,0.05);"></div>
<div class="r" style="left:1334.5px;top:170.2px;width:181.4px;height:36.0px;background:#f2f3f5;border:1.5px solid #e8533a;box-sizing:border-box;"></div>
<div class="r" style="left:1334.2px;top:361.8px;width:183.6px;height:1.0px;background:#eaecf0;"></div>
<div class="t" style="left:1367.6px;top:182.30px;font-size:13.0px;line-height:13.0px;color:#344054;font-weight:400;-webkit-text-stroke:0.2px #344054;">Edit</div>
<div class="t" style="left:1367.6px;top:213.03px;font-size:13.43px;line-height:13.43px;color:#344054;font-weight:400;-webkit-text-stroke:0.2px #344054;">Duplicate</div>
<div class="t" style="left:1367.6px;top:245.13px;font-size:12.6px;line-height:12.6px;color:#344054;font-weight:400;-webkit-text-stroke:0.2px #344054;">Share</div>
<div class="t" style="left:1367.6px;top:276.04px;font-size:13.3px;line-height:13.3px;color:#344054;font-weight:400;-webkit-text-stroke:0.2px #344054;">Move to Group</div>
<div class="t" style="left:1367.6px;top:308.16px;font-size:13.28px;line-height:13.28px;color:#344054;font-weight:400;-webkit-text-stroke:0.2px #344054;">Deactivate Calendar</div>
<div class="t" style="left:1367.6px;top:339.72px;font-size:13.32px;line-height:13.32px;color:#344054;font-weight:400;-webkit-text-stroke:0.2px #344054;">Troubleshoot Calendar</div>
<div class="t" style="left:1367.6px;top:371.81px;font-size:13.22px;line-height:13.22px;color:#e03a3a;font-weight:400;-webkit-text-stroke:0.2px #e03a3a;">Delete Calendar</div>
<svg class="r" style="left:1343px;top:181px" width="15" height="15" viewBox="0 0 15 15" fill="none" stroke="#475467" stroke-width="1.35" stroke-linejoin="round">
<path d="M1.5 13.5 L2 10.6 L10.6 2 A1.7 1.7 0 0 1 13 4.4 L4.4 13 Z"/><path d="M9.3 3.3 L11.7 5.7"/></svg>
<svg class="r" style="left:1343px;top:212px" width="16" height="16" viewBox="0 0 16 16" fill="none" stroke="#475467" stroke-width="1.4">
<rect x="1.1" y="4.6" width="9.4" height="9.7" rx="2"/><path d="M4.6 3.6 V2.8 A1.6 1.6 0 0 1 6.2 1.2 H13.2 A1.6 1.6 0 0 1 14.8 2.8 V8.6 A1.6 1.6 0 0 1 13.2 10.2 H12.3" stroke-dasharray="1.7 1.3"/></svg>
<svg class="r" style="left:1343px;top:243.5px" width="15" height="15" viewBox="0 0 15 15" fill="none" stroke="#475467" stroke-width="1.35">
<circle cx="11.4" cy="3.2" r="2.1"/><circle cx="3.3" cy="7.7" r="2.1"/><circle cx="11.4" cy="12.1" r="2.1"/><path d="M5 6.5 L9.5 4"/><path d="M5 8.5 L9.5 11"/></svg>
<svg class="r" style="left:1343px;top:275px" width="15" height="15" viewBox="0 0 15 15" fill="none" stroke="#475467" stroke-width="1.2" stroke-linecap="round" stroke-linejoin="round">
<path d="M2 7.5 H12.5"/><path d="M8.5 3.5 L12.5 7.5 L8.5 11.5"/></svg>
<svg class="r" style="left:1343px;top:306.5px" width="15" height="15" viewBox="0 0 15 15" fill="none" stroke="#475467" stroke-width="1.4">
<rect x="1" y="4.3" width="13" height="6.8" rx="3.4"/><circle cx="4.6" cy="7.7" r="1.6"/></svg>
<svg class="r" style="left:1342.5px;top:337.5px" width="15" height="15" viewBox="0 0 24 24" fill="none" stroke="#475467" stroke-width="1.9" stroke-linejoin="round">
<path d="M12.22 2h-.44a2 2 0 0 0-2 2v.18a2 2 0 0 1-1 1.73l-.43.25a2 2 0 0 1-2 0l-.15-.08a2 2 0 0 0-2.73.73l-.22.38a2 2 0 0 0 .73 2.73l.15.1a2 2 0 0 1 1 1.72v.51a2 2 0 0 1-1 1.74l-.15.09a2 2 0 0 0-.73 2.73l.22.38a2 2 0 0 0 2.73.73l.15-.08a2 2 0 0 1 2 0l.43.25a2 2 0 0 1 1 1.73V20a2 2 0 0 0 2 2h.44a2 2 0 0 0 2-2v-.18a2 2 0 0 1 1-1.730l.43-.25a2 2 0 0 1 2 0l.15.08a2 2 0 0 0 2.730-.73l.22-.39a2 2 0 0 0-.73-2.730l-.15-.08a2 2 0 0 1-1-1.74v-.5a2 2 0 0 1 1-1.74l.15-.09a2 2 0 0 0 .73-2.73l-.22-.38a2 2 0 0 0-2.73-.73l-.15.08a2 2 0 0 1-2 0l-.43-.25a2 2 0 0 1-1-1.73V4a2 2 0 0 0-2-2z"/><circle cx="12" cy="12" r="3"/></svg>
<svg class="r" style="left:1343px;top:370px" width="15" height="15" viewBox="0 0 15 15" fill="none" stroke="#e03a3a" stroke-width="1.2" stroke-linecap="round">
<path d="M1.8 3.4 H13.2"/><path d="M5.5 3.2 V1.5 H9.5 V3.2"/><path d="M3 3.4 L3.8 13.2 A1 1 0 0 0 4.8 14 H10.2 A1 1 0 0 0 11.2 13.2 L12 3.4"/><path d="M6 6.3 V11"/><path d="M9 6.3 V11"/></svg>
</body></html>
